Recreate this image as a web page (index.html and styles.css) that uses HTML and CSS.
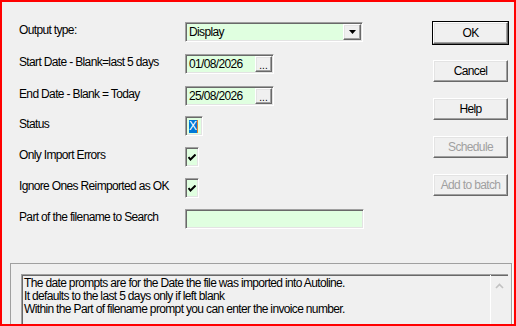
FILE: index.html
```html
<!DOCTYPE html>
<html>
<head>
<meta charset="utf-8">
<title>Import Status Report</title>
<link rel="stylesheet" href="styles.css">
</head>
<body>

<div class="dialog">

    <div class="main">

        <!-- prompts down the left -->
        <div class="form">
            <div class="row r32">
                <span class="label">Output type:</span>
                <div class="field combo">
                    <span class="value">Display</span>
                    <span class="btn3d dropBtn">
                        <svg width="7" height="4" viewBox="0 0 7 4"><polygon points="0,0 7,0 3.5,4" fill="#000"/></svg>
                    </span>
                </div>
            </div>
            <div class="row r32">
                <span class="label">Start Date - Blank=last 5 days</span>
                <div class="field dateField">
                    <span class="value">01/08/2026</span>
                    <span class="btn3d dotBtn">...</span>
                </div>
            </div>
            <div class="row r30">
                <span class="label">End Date - Blank = Today</span>
                <div class="field dateField">
                    <span class="value">25/08/2026</span>
                    <span class="btn3d dotBtn">...</span>
                </div>
            </div>
            <div class="row r31">
                <span class="label">Status</span>
                <div class="field statusBox"><span class="selText">X</span><span class="caret"></span></div>
            </div>
            <div class="row r31">
                <span class="label">Only Import Errors</span>
                <div class="field checkBox">
                    <svg width="8" height="7" viewBox="0 0 8 7"><polyline points="0.5,3 2.5,5.5 7.5,0.5" fill="none" stroke="#000" stroke-width="2"/></svg>
                </div>
            </div>
            <div class="row r31">
                <span class="label">Ignore Ones Reimported as OK</span>
                <div class="field checkBox">
                    <svg width="8" height="7" viewBox="0 0 8 7"><polyline points="0.5,3 2.5,5.5 7.5,0.5" fill="none" stroke="#000" stroke-width="2"/></svg>
                </div>
            </div>
            <div class="row">
                <span class="label">Part of the filename to Search</span>
                <div class="field nameField"></div>
            </div>
        </div>

        <!-- command buttons down the right -->
        <div class="buttons">
            <span class="btn3d cmd default">OK</span>
            <span class="btn3d cmd">Cancel</span>
            <span class="btn3d cmd">Help</span>
            <span class="btn3d cmd disabled">Schedule</span>
            <span class="btn3d cmd disabled">Add to batch</span>
        </div>

    </div>

    <!-- help text at the bottom -->
    <div class="group">
        <div class="memo">
            <div class="memoText">
                The date prompts are for the Date the file was imported into Autoline.<br>
                It defaults to the last 5 days only if left blank<br>
                Within the Part of filename prompt you can enter the invoice number.
            </div>
            <div class="scrollBar">
                <svg width="9" height="6" viewBox="0 0 9 6"><polyline points="1,5 4.5,1.5 8,5" fill="none" stroke="#c2c2c2" stroke-width="1.6"/></svg>
            </div>
        </div>
    </div>

</div>

</body>
</html>
```

FILE: styles.css
```css
/* Dialog look and feel - classic Windows colours */
BODY
{
    margin:         0;
    background-color: #f0f0f0;
    font-family:    "Liberation Sans", Arial, sans-serif;
    font-size:      12px;
    letter-spacing: -0.65px;
    color:          #000000;
}

.dialog
{
    width:          516px;
    height:         326px;
    box-sizing:     border-box;
    border:         2px solid #ff0000;
    background-color: #f0f0f0;
    overflow:       hidden;
    display:        flex;
    flex-direction: column;
}

.main
{
    display:        flex;
    justify-content: space-between;
    padding:        20px 6px 0 17px;
    height:         241px;
    box-sizing:     border-box;
    flex:           none;
}

.form
{
    display:        flex;
    flex-direction: column;
}

.row
{
    display:        flex;
    align-items:    flex-start;
    height:         20px;
}

.r32 { height: 32px; }
.r31 { height: 31px; }
.r30 { height: 30px; }

.label
{
    width:          166px;
    line-height:    16px;
    white-space:    nowrap;
}

/* sunken edit boxes */
.field
{
    height:         20px;
    box-sizing:     border-box;
    border-top:     1px solid #a0a0a0;
    border-left:    1px solid #a0a0a0;
    border-right:   1px solid #ffffff;
    border-bottom:  1px solid #ffffff;
    box-shadow:     inset 1px 1px 0 #696969, inset -1px -1px 0 #e3e3e3;
    background-color: #e0ffe0;
    display:        flex;
    align-items:    center;
}

.value
{
    flex:           1;
    padding-left:   3px;
    line-height:    16px;
}

.combo      { width: 178px; }
.dateField  { width: 89px; }
.nameField  { width: 179px; }
.checkBox   { width: 14px; padding-left: 2px; }
.statusBox  { width: 18px; padding-left: 3px; }

.selText
{
    background-color: #0078d7;
    color:          #ffffff;
    line-height:    13px;
    width:          8px;
    text-align:     center;
    letter-spacing: 0;
}

.caret
{
    width:          1px;
    height:         13px;
    background-color: #e08030;
}

/* raised 3D buttons */
.btn3d
{
    box-sizing:     border-box;
    background-color: #f0f0f0;
    border-top:     1px solid #ffffff;
    border-left:    1px solid #ffffff;
    border-right:   1px solid #696969;
    border-bottom:  1px solid #696969;
    box-shadow:     inset -1px -1px 0 #a0a0a0, inset 1px 1px 0 #e3e3e3;
    display:        flex;
    align-items:    center;
    justify-content: center;
}

.dropBtn
{
    width:          18px;
    height:         16px;
    margin-right:   1px;
}

.dotBtn
{
    width:          17px;
    height:         16px;
    margin-right:   1px;
    font-size:      10px;
    line-height:    10px;
    padding-top:    3px;
    letter-spacing: 0;
}

.buttons
{
    display:        flex;
    flex-direction: column;
    gap:            16px;
}

.cmd
{
    width:          75px;
    height:         22px;
}

.cmd.default
{
    outline:        1px solid #000000;
    outline-offset: 0;
}

.cmd.disabled
{
    color:          #a0a0a0;
}

/* group box with the notes */
.group
{
    margin:         20px 2px 0 8px;
    border:         1px solid #a0a0a0;
    box-shadow:     1px 1px 0 #ffffff;
    padding:        10px 3px 0 10px;
    height:         80px;
    flex:           none;
}

.memo
{
    height:         80px;
    border-top:     1px solid #a0a0a0;
    border-left:    1px solid #a0a0a0;
    box-shadow:     inset 1px 1px 0 #696969;
    display:        flex;
}

.memoText
{
    flex:           1;
    padding:        2px 0 0 2px;
    line-height:    13px;
}

.scrollBar
{
    width:          17px;
    display:        flex;
    justify-content: center;
    padding-top:    8px;
    border-left:    1px solid #ffffff;
}
```
